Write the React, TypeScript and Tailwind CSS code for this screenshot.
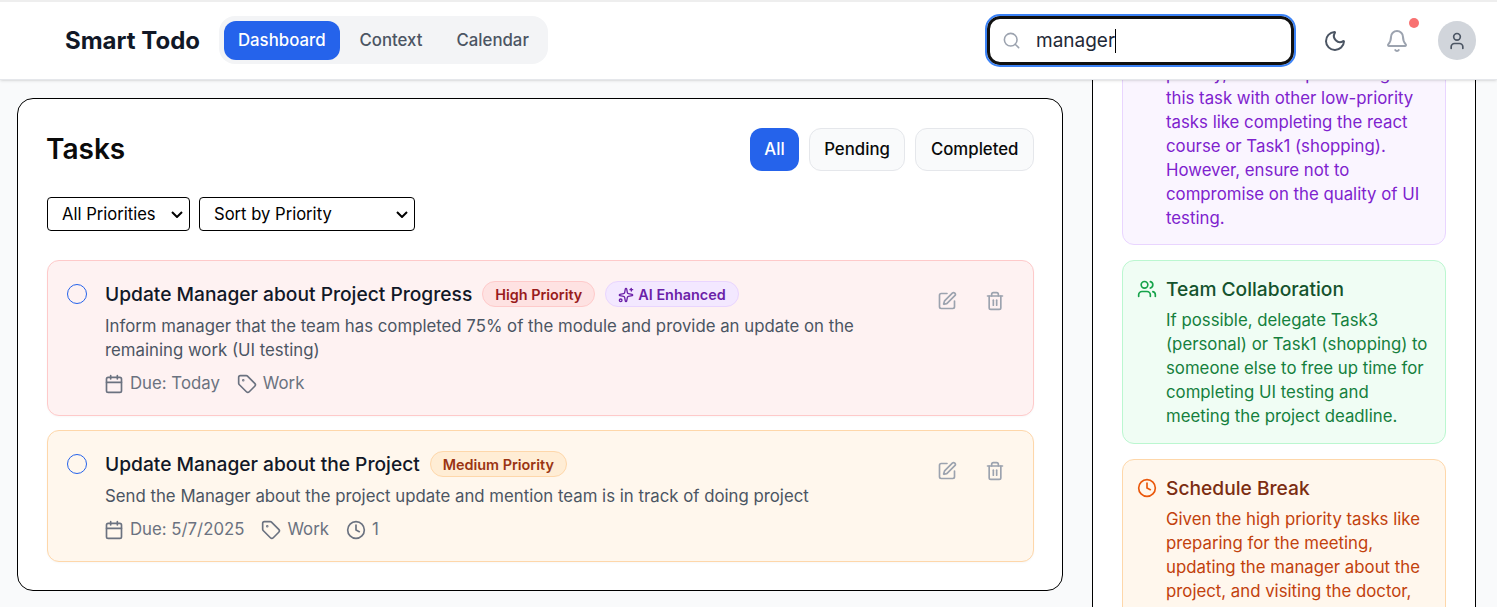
import { Search, Moon, Bell, User, SquarePen, Trash2, Calendar, Tag, Clock, Sparkles, Users } from "lucide-react";

function Meta({ icon, text }: { icon: React.ReactNode; text: string }) {
  return (
    <span className="flex items-center gap-[6px]">
      {icon}
      <span>{text}</span>
    </span>
  );
}

function TaskCard({
  title,
  desc,
  badges,
  meta,
  tone,
}: {
  title: string;
  desc: string;
  badges: React.ReactNode;
  meta: React.ReactNode;
  tone: string;
}) {
  return (
    <div className={`flex rounded-xl border p-[19px] shadow-[0_1px_2px_rgba(0,0,0,0.03)] ${tone}`}>
      <div className="mt-[4px] h-5 w-5 shrink-0 rounded-full border border-[#2563eb]" />
      <div className="ml-[18px] flex-1">
        <div className="flex h-7 items-center">
          <h3 className="text-[19.2px] font-medium text-[#111827]">{title}</h3>
          {badges}
        </div>
        <p className="mt-[6px] w-[790px] text-[16.8px] leading-6 text-[#4b5563]">{desc}</p>
        <div className="-ml-[1px] mt-[10px] flex h-6 items-center gap-[17px] text-[16.8px] text-[#6b7280]">{meta}</div>
      </div>
      <div className="mr-[9px] mt-[11px] flex h-5 gap-[28px] text-[#9ca3af]">
        <SquarePen size={20} />
        <Trash2 size={20} />
      </div>
    </div>
  );
}

function Badge({ className, children }: { className: string; children: React.ReactNode }) {
  return (
    <span className={`ml-[10px] flex h-[26px] items-center gap-1 rounded-full border px-3 pt-[1px] text-[14.4px] font-semibold ${className}`}>
      {children}
    </span>
  );
}

function Chevron() {
  return (
    <svg width="12" height="7" viewBox="0 0 12 7" fill="none" className="pointer-events-none absolute right-[7px] top-[14px] text-black">
      <path d="M1 1l5 5 5-5" stroke="currentColor" strokeWidth="2" />
    </svg>
  );
}

export default function App() {
  return (
    <div className="flex h-[607px] w-[1497px] flex-col overflow-hidden bg-[#f9fafb] font-['Inter',sans-serif]">
      <header className="relative z-10 flex h-[80px] shrink-0 items-center border-t-2 border-b border-t-[#eeeeee] border-b-[#e5e7eb] bg-white pl-[65px] pr-[21px] shadow-sm">
        <h1 className="text-2xl font-bold text-[#111827]">Smart Todo</h1>
        <nav className="-mt-[1px] ml-[19px] flex h-12 items-start gap-[5px] rounded-2xl bg-[#f3f4f6] p-[5px] text-[16.8px] font-medium text-[#4b5563]">
          <span className="flex h-[39px] items-center rounded-xl bg-[#2563eb] px-[14px] text-white">Dashboard</span>
          <span className="flex h-[39px] items-center px-[15px]">Context</span>
          <span className="flex h-[39px] items-center px-[14px]">Calendar</span>
        </nav>
        <div className="relative -mt-[1px] ml-auto flex h-[49px] w-[307px] items-center rounded-[13px] border-[3px] border-[#111111] bg-white pl-[12px] outline-2 outline-[#3b82f6]">
          <Search size={19} className="shrink-0 text-[#9ca3af]" />
          <input
            defaultValue="manager"
            className="ml-[15px] min-w-0 flex-1 bg-transparent pt-[2px] text-[19px] text-[#1f2937] outline-none"
          />
          <span className="absolute left-[125px] top-[10px] h-6 w-px bg-black" />
        </div>
        <Moon size={24} className="ml-[29px] text-[#4b5563]" />
        <div className="relative ml-[38px] h-6 w-6 text-[#9ca3af]">
          <Bell size={24} />
          <span className="absolute right-[-10px] top-[-11px] h-[10px] w-[10px] rounded-full bg-[#f87171]" />
        </div>
        <div className="ml-[29px] flex h-[39px] w-[38px] items-center justify-center rounded-full bg-[#d1d5db] text-[#4b5563]">
          <User size={20} />
        </div>
      </header>

      <main className="flex min-h-0 flex-1 overflow-hidden pl-[17px] pt-[18px]">
        <section className="h-[493px] w-[1046px] shrink-0 rounded-2xl border border-black bg-white pl-[29px] pr-[28px] pt-[29px]">
          <div className="flex h-[43px] items-center justify-between">
            <h2 className="-ml-[1px] -mt-[1px] text-[28px] font-semibold text-[#0a0a0a]">Tasks</h2>
            <div className="flex gap-[10px] text-[16.8px] font-medium text-[#0a0a0a]">
              <button className="h-[43px] rounded-xl bg-[#2563eb] px-[14px] text-white">All</button>
              <button className="h-[43px] rounded-xl border border-[#e5e7eb] bg-[#f9fafb] px-[14.5px]">Pending</button>
              <button className="h-[43px] rounded-xl border border-[#e5e7eb] bg-[#f9fafb] px-[14.5px]">Completed</button>
            </div>
          </div>
          <div className="mt-[26px] flex gap-[9px] text-[16.6px] text-black">
            <div className="relative">
              <select className="h-[34px] w-[143px] appearance-none rounded-[4px] border border-black bg-white pl-[14px]">
                <option>All Priorities</option>
              </select>
              <Chevron />
            </div>
            <div className="relative">
              <select className="h-[34px] w-[216px] appearance-none rounded-[4px] border border-black bg-white pl-[14px]">
                <option>Sort by Priority</option>
              </select>
              <Chevron />
            </div>
          </div>
          <div className="mt-[29px] flex flex-col gap-[14px]">
            <TaskCard
              tone="border-[#fecaca] bg-[#fef2f2]"
              title="Update Manager about Project Progress"
              desc="Inform manager that the team has completed 75% of the module and provide an update on the remaining work (UI testing)"
              badges={
                <>
                  <Badge className="border-[#fecaca] bg-[#fee2e2] text-[#991b1b]">High Priority</Badge>
                  <Badge className="border-[#e9d5ff] bg-[#f3e8ff] text-[#6b21a8]">
                    <Sparkles size={16} />
                    AI Enhanced
                  </Badge>
                </>
              }
              meta={
                <>
                  <Meta icon={<Calendar size={20} />} text="Due: Today" />
                  <Meta icon={<Tag size={20} />} text="Work" />
                </>
              }
            />
            <TaskCard
              tone="border-[#fed7aa] bg-[#fff7ed]"
              title="Update Manager about the Project"
              desc="Send the Manager about the project update and mention team is in track of doing project"
              badges={<Badge className="border-[#fed7aa] bg-[#ffedd5] text-[#9a3412]">Medium Priority</Badge>}
              meta={
                <>
                  <Meta icon={<Calendar size={20} />} text="Due: 5/7/2025" />
                  <Meta icon={<Tag size={20} />} text="Work" />
                  <Meta icon={<Clock size={20} />} text="1" />
                </>
              }
            />
          </div>
        </section>

        <aside className="ml-[29px] -mt-[60px] flex w-[384px] shrink-0 flex-col gap-[15px] self-start border-x border-black bg-white px-[29px] pt-[10px]">
          <div className="rounded-xl border border-[#e9d5ff] bg-[#faf5ff] pb-[14px] pl-[43px] pr-[12px] pt-[13px] text-[16.8px] leading-6 text-[#7e22ce]">
            <p>
              priority, consider prioritizing
              <br />
              this task with other low-priority tasks like completing the react course or Task1 (shopping). However,
              ensure not to compromise on the quality of UI testing.
            </p>
          </div>
          <div className="rounded-xl border border-[#bbf7d0] bg-[#f0fdf4] pb-[15px] pl-[43px] pr-[12px] pt-[14px]">
            <div className="relative flex h-7 items-center text-[19.2px] font-medium text-[#14532d]">
              <Users size={20} className="absolute left-[-29px] top-[4px] text-[#16a34a]" />
              Team Collaboration
            </div>
            <p className="mt-[5px] text-[16.8px] leading-6 text-[#15803d]">
              If possible, delegate Task3 (personal) or Task1 (shopping) to someone else to free up time for completing UI
              testing and meeting the project deadline.
            </p>
          </div>
          <div className="rounded-xl border border-[#fed7aa] bg-[#fff7ed] pb-[15px] pl-[43px] pr-[12px] pt-[14px]">
            <div className="relative flex h-7 items-center text-[19.2px] font-medium text-[#7c2d12]">
              <Clock size={20} className="absolute left-[-29px] top-[4px] text-[#ea580c]" />
              Schedule Break
            </div>
            <p className="mt-[5px] text-[16.8px] leading-6 text-[#c2410c]">
              Given the high priority tasks like preparing for the meeting, updating the manager about the project, and
              visiting the doctor, make sure to take a short break.
            </p>
          </div>
        </aside>
      </main>
    </div>
  );
}
